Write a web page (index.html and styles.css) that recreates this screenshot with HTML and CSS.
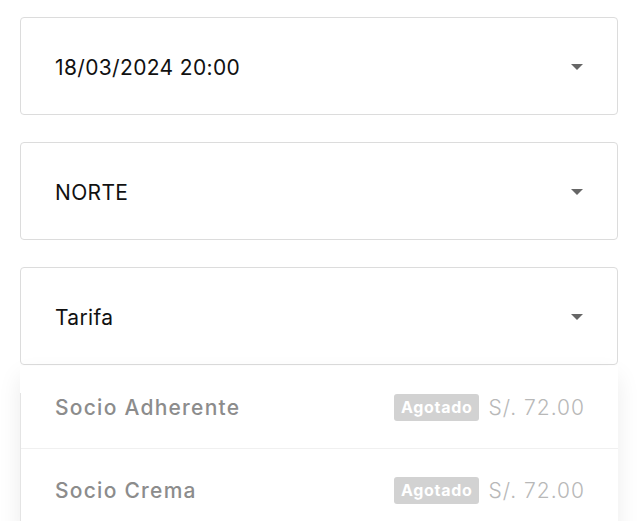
FILE: index.html
```html
<!DOCTYPE html>
<html lang="es">
<head>
<meta charset="utf-8">
<link rel="stylesheet" href="styles.css">
</head>
<body>
<div class="form">
  <div class="select">
    <span class="value">18/03/2024 20:00</span>
    <span class="caret"></span>
  </div>
  <div class="select">
    <span class="value">NORTE</span>
    <span class="caret"></span>
  </div>
  <div class="select-wrap">
    <div class="select">
      <span class="value">Tarifa</span>
      <span class="caret"></span>
    </div>
    <ul class="menu">
      <li class="option">
        <span class="name">Socio Adherente</span>
        <span class="right"><span class="badge">Agotado</span><span class="price">S/. 72.00</span></span>
      </li>
      <li class="option">
        <span class="name">Socio Crema</span>
        <span class="right"><span class="badge">Agotado</span><span class="price">S/. 72.00</span></span>
      </li>
    </ul>
  </div>
</div>
</body>
</html>
```
FILE: styles.css
```css
html, body {
  margin: 0;
  padding: 0;
  background: #ffffff;
}
body {
  font-family: Inter, "Noto Sans", sans-serif;
  color: #111;
}
.form {
  display: flex;
  flex-direction: column;
  gap: 27px;
  padding: 17px 22px 0 20px;
  height: 521px;
  box-sizing: border-box;
  overflow: hidden;
}
.select {
  flex-shrink: 0;
  height: 98px;
  box-sizing: border-box;
  border: 1px solid #dcdcdc;
  border-radius: 4px;
  display: flex;
  align-items: center;
  justify-content: space-between;
  padding: 3px 34px 0 34px;
  background: #fff;
}
.value {
  font-size: 21px;
  font-weight: 400;
  letter-spacing: 0.35px;
}
.caret {
  width: 0;
  height: 0;
  border-left: 6px solid transparent;
  border-right: 6px solid transparent;
  border-top: 6px solid #666;
  margin-top: -2px;
}
.select-wrap {
  display: flex;
  flex-direction: column;
  flex-shrink: 0;
}
.menu {
  flex-shrink: 0;
  position: relative;
  margin: 1px 0 0 0;
  padding: 0;
  list-style: none;
  background: #fff;
  box-shadow: 0 10px 22px rgba(0,0,0,0.08);
}
.menu::before {
  content: "";
  position: absolute;
  left: 0;
  top: 27px;
  bottom: 0;
  width: 1px;
  background: #e4e4e4;
}
.option {
  height: 83px;
  box-sizing: border-box;
  display: flex;
  align-items: center;
  justify-content: space-between;
  padding: 0 33px 0 35px;
  border-bottom: 1px solid #f0f0f0;
}
.name {
  font-size: 21px;
  font-weight: 500;
  color: #8c8c8c;
  letter-spacing: 1.25px;
}
.right {
  display: flex;
  align-items: center;
  gap: 9px;
}
.badge {
  background: #d2d2d2;
  color: #fff;
  font-weight: 700;
  font-size: 16px;
  height: 27px;
  line-height: 27px;
  padding: 0 7px;
  border-radius: 3px;
  letter-spacing: 0.7px;
}
.price {
  font-size: 21px;
  font-weight: 300;
  color: #b8b8b8;
  letter-spacing: 1px;
}
```
